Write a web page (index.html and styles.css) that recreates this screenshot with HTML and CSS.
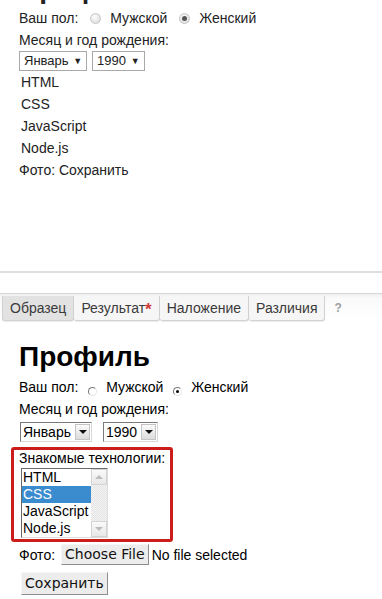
FILE: index.html
```html
<!DOCTYPE html>
<html lang="ru">
<head>
  <meta charset="UTF-8" />
  <title>Профиль</title>
  <link rel="stylesheet" href="styles.css">
</head>
<body>

  <!-- Plain render of the form -->
  <div class="sample">
    <h1 class="sample-title">Профиль</h1>
    <div class="line">Ваш пол: <span class="dot"></span> Мужской <span class="dot on"></span> Женский</div>
    <div class="line">Месяц и год рождения:</div>
    <div class="picks">
      <span class="pick">Январь <i>▼</i></span>
      <span class="pick">1990 <i>▼</i></span>
    </div>
    <div class="line item">HTML</div>
    <div class="line item">CSS</div>
    <div class="line item">JavaScript</div>
    <div class="line item">Node.js</div>
    <div class="line">Фото: Сохранить</div>
  </div>

  <div class="divider"></div>

  <!-- Compare tabs -->
  <nav class="tabs">
    <span class="tab active">Образец</span>
    <span class="tab">Результат<sup>*</sup></span>
    <span class="tab">Наложение</span>
    <span class="tab">Различия</span>
    <span class="help">?</span>
  </nav>

  <!-- Result render -->
  <div class="result">
    <h1>Профиль</h1>
    <div class="line">Ваш пол: <span class="radio"></span> Мужской <span class="radio on"></span> Женский</div>
    <div class="line">Месяц и год рождения:</div>
    <div class="selects">
      <span class="select month">Январь<b class="arrow"></b></span>
      <span class="select year">1990<b class="arrow"></b></span>
    </div>

    <div class="highlight">
      <div class="label">Знакомые технологии:</div>
      <div class="listbox">
        <ul>
          <li>HTML</li>
          <li class="selected">CSS</li>
          <li>JavaScript</li>
          <li>Node.js</li>
        </ul>
        <div class="scrollbar">
          <span class="sb-btn up"></span>
          <span class="sb-track"></span>
          <span class="sb-btn down"></span>
        </div>
      </div>
    </div>

    <div class="file-row">
      Фото: <span class="btn">Choose File</span> <span class="nofile">No file selected</span>
    </div>
    <div class="submit-row">
      <span class="btn save">Сохранить</span>
    </div>
  </div>

</body>
</html>
```

FILE: styles.css
```css
* { box-sizing: border-box; }
body {
  margin: 0;
  background: #fff;
  color: #111;
  font-family: 'Liberation Sans', Arial, sans-serif;
  font-size: 14px;
}

/* Top sample */
.sample {
  display: flow-root;
  height: 271px;
  padding-left: 19px;
  color: #222;
}
.sample-title {
  margin: -27px 0 2px;
  font-size: 28px;
  line-height: 32px;
  height: 32px;
}
.line {
  line-height: 22px;
  height: 22px;
  white-space: nowrap;
}
.item { padding-left: 2px; }

.dot {
  display: inline-block;
  width: 11px;
  height: 11px;
  margin: 0 5px 0 8px;
  border-radius: 50%;
  border: 1px solid #c4c4c4;
  background: radial-gradient(circle at 40% 35%, #fdfdfd, #d6d6d6);
  vertical-align: -1px;
  position: relative;
}
.dot.on::after {
  content: "";
  position: absolute;
  left: 2px;
  top: 2px;
  width: 5px;
  height: 5px;
  border-radius: 50%;
  background: #555;
}

.picks {
  display: flex;
  gap: 5px;
  height: 20px;
}
.pick {
  height: 20px;
  padding: 0 4px 0 4px;
  border: 1px solid #a9a9a9;
  font-size: 13px;
  line-height: 18px;
  white-space: nowrap;
}
.pick i {
  font-style: normal;
  font-size: 9px;
  margin-left: 1px;
  vertical-align: 1px;
}

.divider {
  height: 2px;
  background: #dedede;
  margin-bottom: 20px;
}

/* Tabs */
.tabs {
  display: flex;
  align-items: flex-start;
  height: 29px;
  padding: 2px 0 0 2px;
  border-top: 1px solid #d6d6d6;
  background: linear-gradient(#efefef, #fafafa 4px, #fff);
}
.tab {
  height: 25px;
  padding: 0 7px;
  line-height: 24px;
  color: #3a3a3a;
  background: #f6f6f6;
  border: 1px solid #d2d2d2;
  border-top: none;
  border-left: none;
  border-radius: 0 0 3px 3px;
  box-shadow: 0 1px 1px rgba(0,0,0,0.08);
}
.tab.active {
  background: #e2e2e2;
  border-left: 1px solid #d2d2d2;
}
.tab sup {
  color: #d23a3a;
  font-size: 17px;
  line-height: 0;
  vertical-align: -2px;
  font-weight: bold;
}
.help {
  margin-left: 9px;
  color: #a0a0a0;
  font-size: 12px;
  font-weight: bold;
  line-height: 24px;
}

/* Result */
.result {
  padding-left: 19px;
  color: #000;
}
.result h1 {
  margin: 19px 0 3px;
  font-size: 28px;
  line-height: 32px;
}

.radio {
  display: inline-block;
  width: 9px;
  height: 9px;
  margin: 0 5px 0 6px;
  border-radius: 50%;
  border: 1px solid;
  border-color: #777 #e6e6e6 #e6e6e6 #777;
  vertical-align: -4px;
  position: relative;
}
.radio.on::after {
  content: "";
  position: absolute;
  left: 2px;
  top: 2px;
  width: 3px;
  height: 3px;
  background: #000;
  border-radius: 50%;
}

.selects {
  display: flex;
  gap: 11px;
  margin: 2px 0 0 1px;
  height: 20px;
}
.select {
  display: flex;
  align-items: center;
  justify-content: space-between;
  height: 20px;
  padding-left: 2px;
  border: 1px solid #6f6f6f;
  border-color: #7a7a7a #d8d8d8 #d8d8d8 #7a7a7a;
  line-height: 18px;
}
.select.month { width: 72px; }
.select.year { width: 55px; }
.arrow {
  width: 15px;
  height: 16px;
  margin-right: 1px;
  background: linear-gradient(#fbfbfb, #dcdcdc);
  border: 1px solid #c4c4c4;
  position: relative;
}
.arrow::after {
  content: "";
  position: absolute;
  left: 3px;
  top: 5px;
  border-left: 4px solid transparent;
  border-right: 4px solid transparent;
  border-top: 4px solid #111;
}

.highlight {
  width: 162px;
  margin: 5px 0 0 -8px;
  padding: 0 0 1px 5px;
  border: 3px solid #cc1d1d;
  border-radius: 3px;
}
.label {
  line-height: 16px;
  height: 18px;
  padding-left: 0;
}
.listbox {
  display: flex;
  width: 87px;
  margin-left: 2px;
  border: 1px solid;
  border-color: #6a6a6a #dcdcdc #dcdcdc #6a6a6a;
}
.listbox ul {
  list-style: none;
  margin: 0;
  padding: 0;
  width: 70px;
}
.listbox li {
  height: 17px;
  line-height: 17px;
  padding-left: 1px;
  white-space: nowrap;
}
.listbox li.selected {
  background: #3a8ccf;
  color: #fff;
}
.scrollbar {
  display: flex;
  flex-direction: column;
  width: 16px;
  background: repeating-conic-gradient(#f4f4f4 0 25%, #e4e4e4 0 50%) 0 0 / 2px 2px;
}
.sb-btn {
  height: 16px;
  background: linear-gradient(#fafafa, #e8e8e8);
  border: 1px solid #d4d4d4;
  position: relative;
}
.sb-track { flex: 1; }
.sb-btn::after {
  content: "";
  position: absolute;
  left: 3px;
  border-left: 4px solid transparent;
  border-right: 4px solid transparent;
}
.sb-btn.up::after { top: 5px; border-bottom: 4px solid #bcbcbc; }
.sb-btn.down::after { top: 5px; border-top: 4px solid #bcbcbc; }

.file-row {
  display: flex;
  align-items: center;
  gap: 5px;
  margin-top: 2px;
  height: 21px;
  white-space: nowrap;
}
.btn {
  display: inline-block;
  height: 21px;
  padding: 0 3px;
  font-family: 'DejaVu Sans', sans-serif;
  font-size: 14px;
  line-height: 19px;
  color: #111;
  background: #ececec;
  border: 1px solid;
  border-color: #f6f6f6 #8d8d8d #8d8d8d #f6f6f6;
}
.file-row .btn { margin-left: 1px; }
.nofile { margin-left: -2px; }
.submit-row {
  margin: 7px 0 0 2px;
}
.btn.save {
  height: 23px;
  padding: 0 3px;
  line-height: 21px;
}
```
